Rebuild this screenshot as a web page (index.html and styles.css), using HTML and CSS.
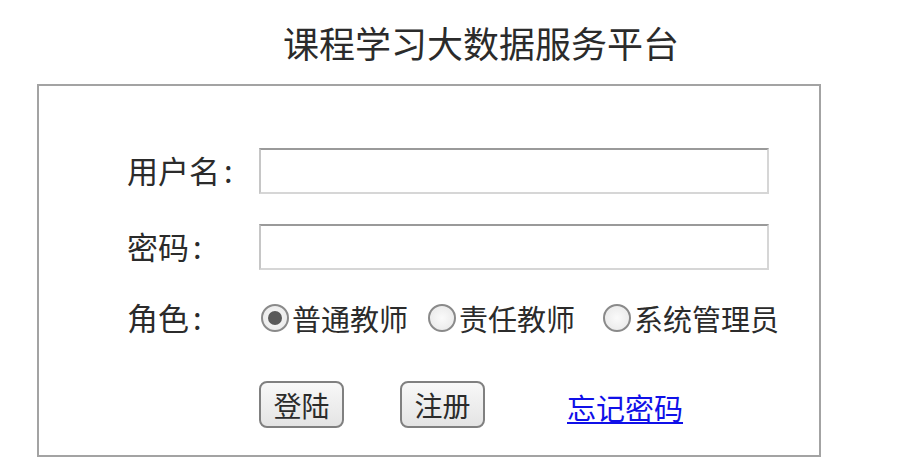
FILE: index.html
```html
<!DOCTYPE html>
<html lang="zh-CN">
<head>
  <meta charset="utf-8" />
  <title>课程学习大数据服务平台</title>
  <link rel="stylesheet" href="styles.css">
</head>
<body>
  <h1 class="title">课程学习大数据服务平台</h1>

  <form class="login-box">
    <div class="row">
      <label class="label" for="user">用户名<i>:</i></label>
      <input class="field" id="user" type="text">
    </div>
    <div class="row">
      <label class="label" for="pwd">密码<i>:</i></label>
      <input class="field" id="pwd" type="password">
    </div>
    <div class="row row-role">
      <span class="label">角色<i>:</i></span>
      <div class="roles">
        <label class="role"><input type="radio" name="role" checked><span>普通教师</span></label>
        <label class="role"><input type="radio" name="role"><span>责任教师</span></label>
        <label class="role"><input type="radio" name="role"><span>系统管理员</span></label>
      </div>
    </div>
    <div class="row row-actions">
      <button class="btn" type="button">登陆</button>
      <button class="btn btn-reg" type="button">注册</button>
      <a class="forgot" href="#">忘记密码</a>
    </div>
  </form>
</body>
</html>
```

FILE: styles.css
```css
/* base */
*,*::before,*::after{box-sizing:border-box;}

body{
  margin:0;
  background:#fff;
  color:#2b2b2b;
  font-family:"Noto Sans CJK SC","Noto Sans",sans-serif;
}

/* title */
.title{
  margin:0;
  padding:19px 0 0 283px;
  height:84px;
  font-size:36px;
  font-weight:400;
  line-height:46px;
}

/* box */
.login-box{
  margin-left:37px;
  width:784px;
  height:373px;
  border:2px solid #a3a3a3;
  padding:62px 0 0 88px;
}

.row{
  display:flex;
  align-items:center;
  height:46px;
  margin-bottom:30px;
}

.label{
  width:132px;
  flex:none;
  font-size:31px;
  line-height:40px;
  margin-top:-3px;
}
.label i{font-style:normal;margin-left:4px;}

.field{
  width:510px;
  height:46px;
  border:2px solid #d6d6d6;
  border-top-color:#9a9a9a;
  border-left-color:#c6c6c6;
  background:#fff;
  font-size:20px;
}

/* roles */
.row-role{height:40px;margin-bottom:43px;margin-top:-2px;}
.roles{display:flex;align-items:center;}
.role{display:flex;align-items:center;font-size:29px;margin-right:18px;}
.role:nth-child(2){margin-right:26px;}
.role span{margin-left:3px;}

.role input{
  appearance:none;
  margin:0 0 0 2px;
  width:28px;height:28px;
  border:2px solid #8a8a8a;
  border-radius:50%;
  background:radial-gradient(circle,#fafafa 0,#e6e6e6 100%);
  display:grid;place-items:center;
}
.role input:checked::after{
  content:"";
  width:14px;height:14px;
  border-radius:50%;
  background:#5a5a5a;
}

/* actions */
.row-actions{height:47px;padding-left:132px;margin-bottom:0;}
.btn{
  width:85px;height:47px;
  border:2px solid #808080;
  border-radius:8px;
  background:linear-gradient(#f8f8f8,#e4e4e4);
  color:#2b2b2b;
  font-family:inherit;
  font-size:28px;
  padding:0;
}
.btn-reg{margin-left:56px;}
.forgot{
  margin-left:82px;
  margin-top:5px;
  color:#1010e8;
  font-size:29px;
  text-decoration:underline;
}
```
